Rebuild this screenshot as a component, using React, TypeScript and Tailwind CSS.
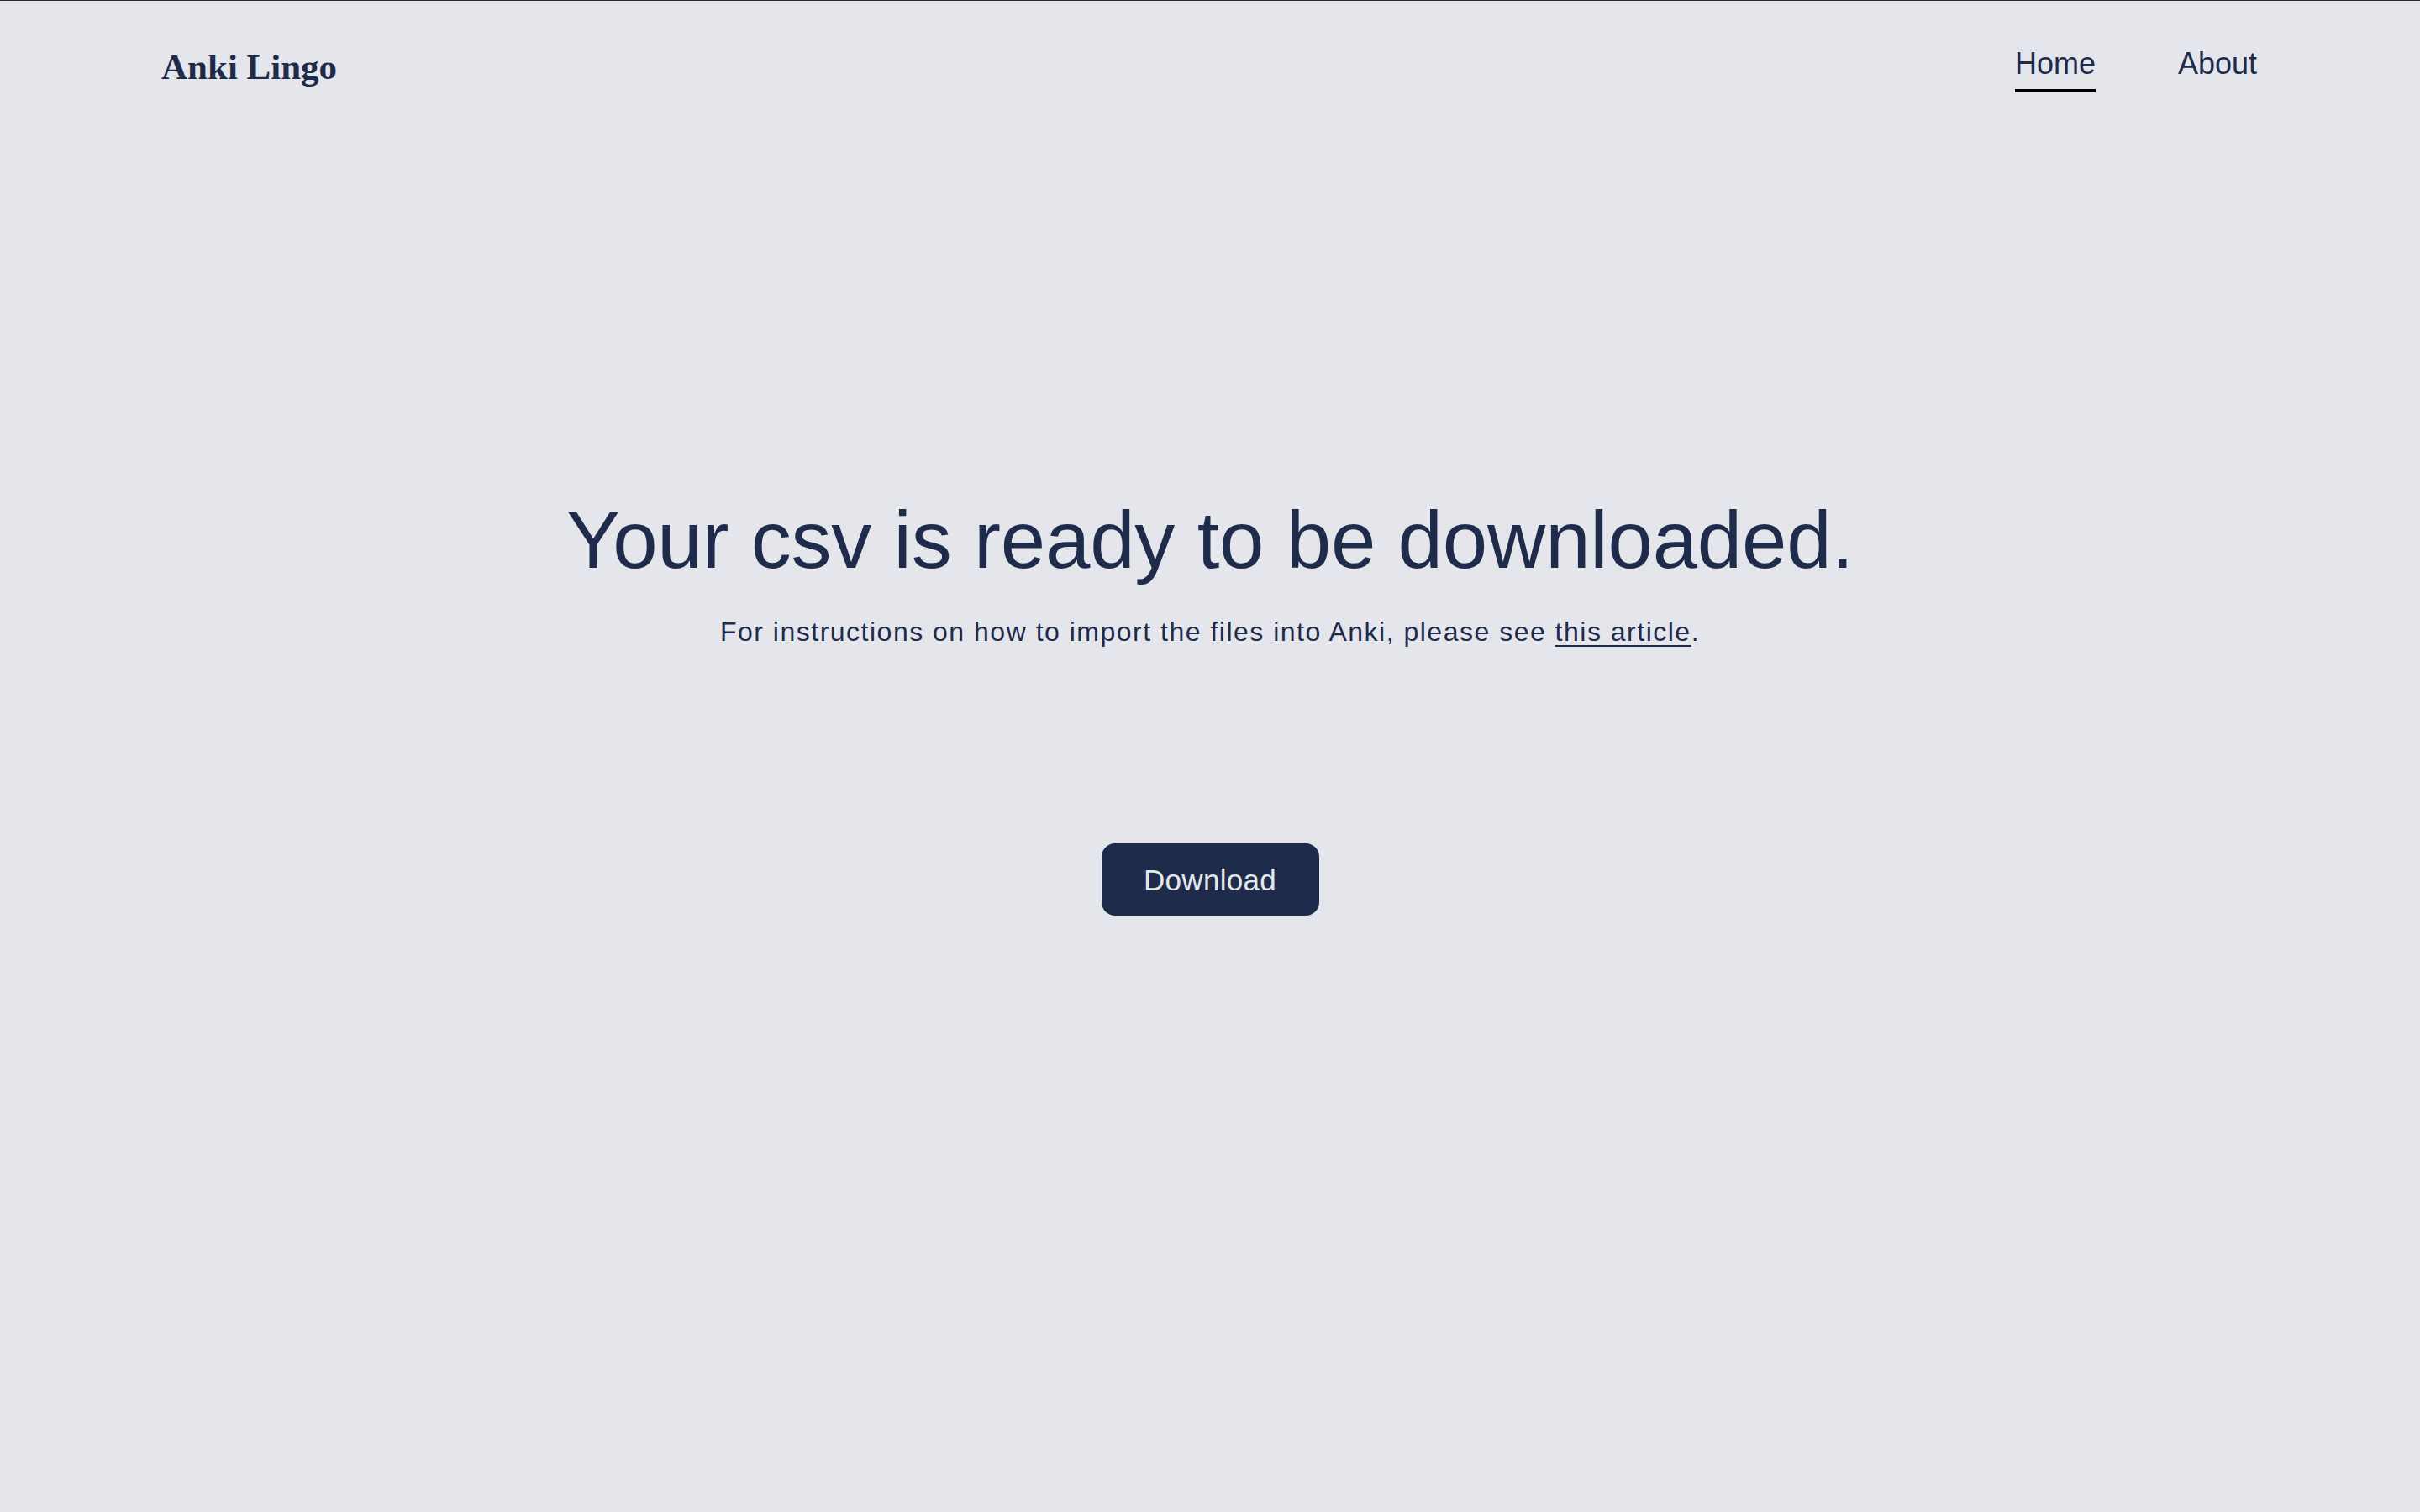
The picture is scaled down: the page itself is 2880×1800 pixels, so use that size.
export default function App() {
  return (
    <div className="min-h-screen bg-[#e4e6eb] border-t border-[#2a2a2a] font-['Liberation_Sans',Arial,sans-serif] text-[#1e2b4b]">
      {/* Top bar */}
      <header className="flex items-start justify-between px-[192px] pt-[57px]">
        <a href="#" className="font-['Liberation_Serif','Times_New_Roman',serif] font-bold text-[43px] leading-none text-[#1e2b4b]">
          Anki Lingo
        </a>
        <nav className="flex items-start gap-[98px] mr-[2px]">
          <a href="#" className="flex flex-col">
            <span className="text-[36px] leading-none">Home</span>
            <span className="mt-[12px] h-[4px] bg-black" />
          </a>
          <a href="#" className="flex flex-col">
            <span className="text-[36px] leading-none">About</span>
          </a>
        </nav>
      </header>

      {/* Ready message */}
      <main className="flex flex-col items-center pt-[485px]">
        <h1 className="text-[96px] leading-none tracking-[-0.2px]">
          Your csv is ready to be downloaded.
        </h1>
        <p className="mt-[45px] text-[32px] leading-none tracking-[1.5px]">
          For instructions on how to import the files into Anki, please see{" "}
          <a href="#" className="underline decoration-2 underline-offset-[5px]">
            this article
          </a>
          .
        </p>
        <button className="mt-[236px] flex h-[86px] w-[259px] items-center justify-center rounded-2xl bg-[#1e2b4b] text-[35px] leading-none tracking-[0.3px] text-[#e5e7eb]">
          Download
        </button>
      </main>
    </div>
  );
}
